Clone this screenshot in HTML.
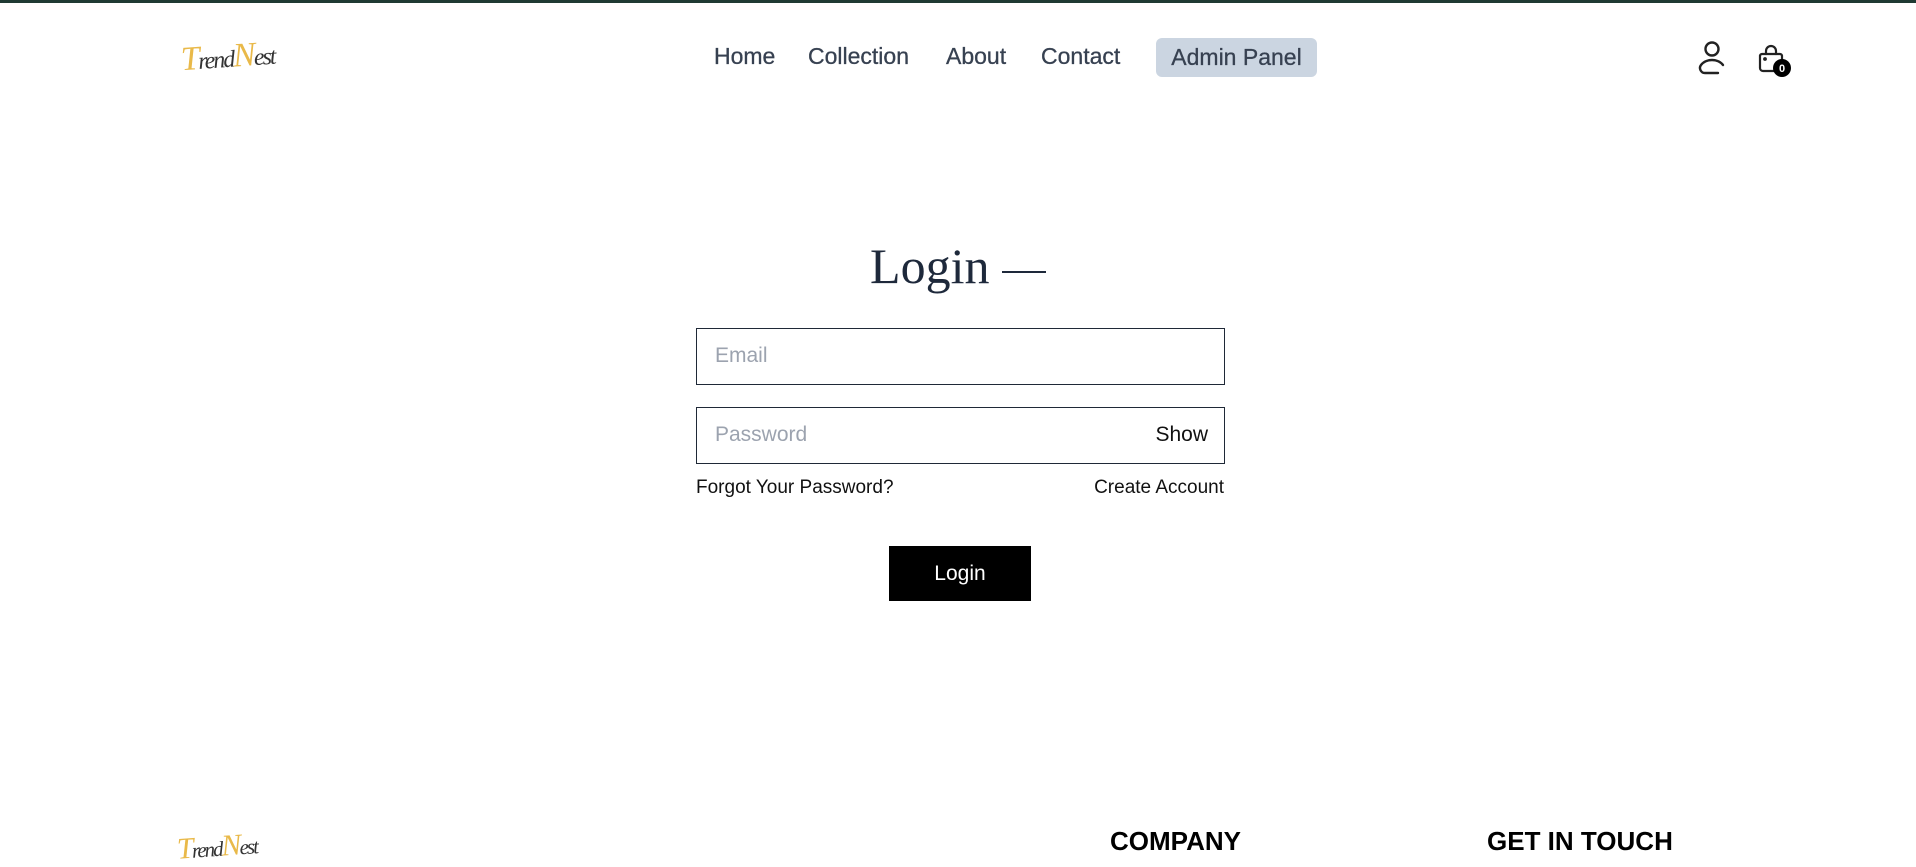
<!DOCTYPE html>
<html><head><meta charset="utf-8"><style>
*{margin:0;padding:0;box-sizing:border-box}
body{width:1916px;height:867px;overflow:hidden;background:#fff;font-family:"Liberation Sans",sans-serif;position:relative;color:#1f2937}
.top{position:absolute;left:0;top:0;width:1916px;height:3px;background:#1f3a33}
.abs{position:absolute;white-space:nowrap}
.nav{font-size:23px;color:#374151;top:43px;-webkit-text-stroke:0.3px #374151}
.logo{font-family:"Liberation Serif",serif;font-style:italic}
.in{position:absolute;left:696px;width:529px;height:57px;border:1.5px solid #1f2937;font-size:21px;color:#9ca3af;padding-left:18px;line-height:54px}
</style></head><body>
<div class="top"></div>
<div class="abs logo" style="left:181px;top:38px;font-size:34px;letter-spacing:-2px;transform:rotate(-4deg)"><span style="color:#e9b949">T</span><span style="color:#333;font-size:24px">rend</span><span style="color:#e9b949">N</span><span style="color:#333;font-size:24px">est</span></div>
<div class="abs nav" style="left:714px">Home</div>
<div class="abs nav" style="left:808px">Collection</div>
<div class="abs nav" style="left:946px">About</div>
<div class="abs nav" style="left:1041px">Contact</div>
<div class="abs" style="left:1156px;top:38px;width:161px;height:39px;background:#cbd5e1;border-radius:6px;font-size:23px;color:#374151;text-align:center;line-height:39px;-webkit-text-stroke:0.3px #374151">Admin Panel</div>
<svg class="abs" style="left:1696px;top:40px" width="32" height="36" viewBox="0 0 32 36" fill="none" stroke="#222" stroke-width="2.4" stroke-linecap="round"><circle cx="16" cy="9" r="6.5"/><path d="M22 33H9a5 5 0 0 1-4-8c3-4 8-5 11-5s8 1 11 5"/></svg>
<svg class="abs" style="left:1756px;top:42px" width="40" height="40" viewBox="0 0 40 40" fill="none" stroke="#222" stroke-width="2.2" stroke-linecap="round" stroke-linejoin="round"><path d="M10 12V9a5 5 0 0 1 10 0v3"/><path d="M6 12h18a2 2 0 0 1 2 2v12a3 3 0 0 1-3 3H7a3 3 0 0 1-3-3V14a2 2 0 0 1 2-2z"/><circle cx="9" cy="17" r="0.8" fill="#222"/><circle cx="26" cy="26" r="9" fill="#000" stroke="none"/><text x="26" y="30" font-size="11" font-weight="bold" fill="#fff" stroke="none" text-anchor="middle" font-family="Liberation Sans">0</text></svg>
<div class="abs" style="left:0;width:1916px;text-align:center;top:237px;font-family:'Liberation Serif',serif;font-size:50px;color:#1e293b">Login <span style="display:inline-block;width:44px;height:2px;background:#1e293b;vertical-align:middle"></span></div>
<div class="in" style="top:328px">Email</div>
<div class="in" style="top:407px">Password<span style="position:absolute;right:16px;color:#111">Show</span></div>
<div class="abs" style="left:696px;top:477px;font-size:19px;color:#111">Forgot Your Password?</div>
<div class="abs" style="right:692px;top:477px;font-size:19px;color:#111">Create Account</div>
<div class="abs" style="left:889px;top:546px;width:142px;height:55px;background:#000;color:#fff;font-size:21px;text-align:center;line-height:55px">Login</div>
<div class="abs logo" style="left:177px;top:830px;font-size:30px;letter-spacing:-2px;transform:rotate(-4deg)"><span style="color:#e9b949">T</span><span style="color:#333;font-size:21px">rend</span><span style="color:#e9b949">N</span><span style="color:#333;font-size:21px">est</span></div>
<div class="abs" style="left:1110px;top:826px;font-size:26px;font-weight:bold;color:#000">COMPANY</div>
<div class="abs" style="left:1487px;top:826px;font-size:26px;font-weight:bold;color:#000">GET IN TOUCH</div>
</body></html>
